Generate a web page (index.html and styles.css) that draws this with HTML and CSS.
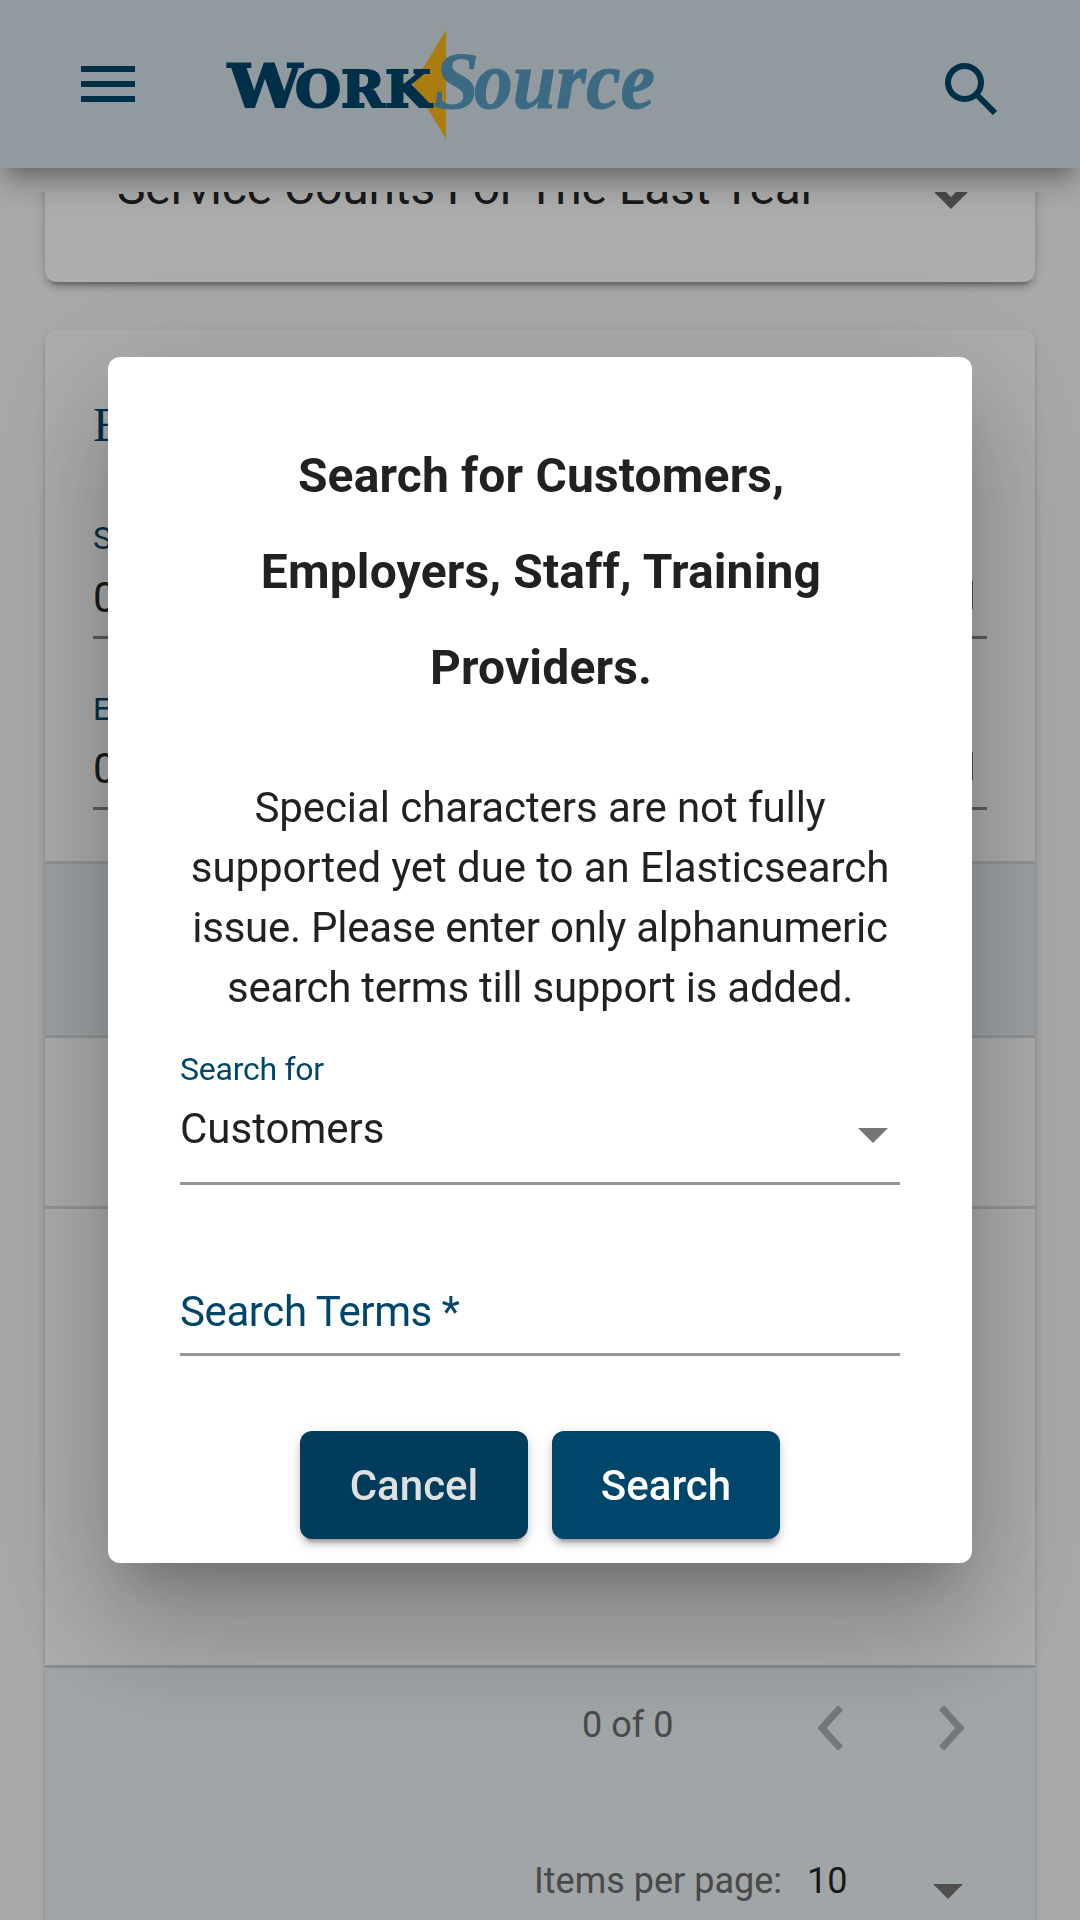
FILE: index.html
```
<!DOCTYPE html>
<html lang="en">
<head>
<meta charset="utf-8">
<title>WorkSource</title>
<link rel="stylesheet" href="styles.css">
</head>
<body>
<div class="page">
  <header class="topbar">
    <svg class="icon menu" viewBox="0 0 54 36" aria-label="Menu"><path d="M0 0h54v6H0zM0 15h54v6H0zM0 30h54v6H0z"/></svg>
    <svg class="logo" viewBox="0 0 440 120" aria-label="WorkSource">
      <path class="star" d="M226 6V115L193 60.500z"/>
      <g class="work">
        <text x="8" y="82.500" font-size="59" textLength="74" lengthAdjust="spacingAndGlyphs">W</text>
        <text x="75" y="82.500" font-size="50" textLength="136" lengthAdjust="spacingAndGlyphs">ORK</text>
      </g>
      <text class="source" x="214" y="84" font-size="81" textLength="45" lengthAdjust="spacingAndGlyphs">S</text>
      <text class="source" x="254" y="84" font-size="83" textLength="181" lengthAdjust="spacingAndGlyphs">ource</text>
    </svg>
    <svg class="icon search" viewBox="0 0 52 52" aria-label="Search"><circle cx="19.500" cy="19.500" r="16.500"/><path d="M32 32l18 18"/></svg>
  </header>
  <main class="scroller">
    <section class="card counts">
      <h2>Service Counts For The Last Year</h2>
      <svg class="chevron" viewBox="0 0 36 24"><path d="M4.500 3.500L18 17 31.500 3.500"/></svg>
    </section>
    <section class="card events">
      <h3>Events</h3>
      <div class="date"><label>Start Date</label><div class="row"><span>01/01/2021</span><i class="cal"></i></div></div>
      <div class="date"><label>End Date</label><div class="row"><span>01/31/2021</span><i class="cal"></i></div></div>
      <div class="thead"></div>
      <div class="trow"></div>
      <div class="empty"></div>
      <footer class="pager">
        <div class="range">
          <span>0 of 0</span>
          <svg class="nav" viewBox="0 0 26 46"><path d="M23.500 2.500L5 23l18.500 20.500"/></svg>
          <svg class="nav next" viewBox="0 0 26 46"><path d="M2.500 2.500L21 23 2.500 43.500"/></svg>
        </div>
        <div class="size"><span>Items per page:</span><b>10</b><i class="caret"></i></div>
      </footer>
    </section>
  </main>
</div>
<div class="scrim">
  <div class="dialog" role="dialog">
    <h1>Search for Customers,<br>Employers, Staff, Training<br>Providers.</h1>
    <p class="note"><span>Special characters are not fully</span><span>supported yet due to an Elasticsearch</span><span class="tight">issue. Please enter only alphanumeric</span><span class="tight">search terms till support is added.</span></p>
    <div class="field select">
      <label>Search for</label>
      <div class="value"><span>Customers</span><i class="caret"></i></div>
    </div>
    <div class="field terms"><label>Search Terms *</label></div>
    <div class="actions">
      <button class="btn cancel">Cancel</button>
      <button class="btn">Search</button>
    </div>
  </div>
</div>
</body>
</html>
```
FILE: styles.css
```
* { box-sizing: border-box; }
body {
  margin: 0;
  font-family: Roboto, sans-serif;
  color: rgba(0, 0, 0, .87);
}
h1, h2, h3, p { margin: 0; }
.page {
  display: flex;
  flex-direction: column;
  height: 1920px;
  overflow: hidden;
  background: #fafafa;
}
.topbar {
  position: relative;
  z-index: 1;
  flex: none;
  display: flex;
  align-items: center;
  height: 168px;
  padding: 0 81px;
  background: #d5e4eb;
  box-shadow: 0 15px 15px -9px rgba(0, 0, 0, .2), 0 18px 30px 0 rgba(0, 0, 0, .14), 0 9px 42px 0 rgba(0, 0, 0, .12);
}
.icon { fill: #00466b; }
.menu { width: 54px; height: 36px; }
.logo { width: 440px; height: 120px; margin-left: 85px; overflow: visible; }
.star { fill: #fbb818; }
.work {
  fill: #00466b;
  stroke: #00466b;
  stroke-width: 2px;
  font-family: "DejaVu Serif", serif;
  font-weight: 700;
}
.source {
  fill: #5a9dc2;
  stroke: #5a9dc2;
  stroke-width: 1px;
  font-family: "Liberation Serif", serif;
  font-weight: 700;
  font-style: italic;
}
.search {
  width: 52px;
  height: 52px;
  margin: 10px 2px 0 auto;
  fill: none;
  stroke: #00466b;
  stroke-width: 6px;
}
.scroller {
  flex: 1;
  display: flex;
  flex-direction: column;
  gap: 48px;
  margin-top: 24px;
  padding: 0 45px;
  overflow: hidden;
}
.card { flex: none; border-radius: 12px; background: #fff; }
.counts {
  display: flex;
  justify-content: space-between;
  align-items: center;
  height: 188px;
  margin-top: -98px;
  padding: 0 66px 0 72px;
  box-shadow: 0 9px 3px -6px rgba(0, 0, 0, .2), 0 6px 6px 0 rgba(0, 0, 0, .14), 0 3px 15px 0 rgba(0, 0, 0, .12);
}
.counts h2 { font-size: 48px; line-height: 60px; font-weight: 400; letter-spacing: -.15px; }
.chevron { width: 36px; height: 24px; margin-top: 19px; fill: none; stroke: #6f6f6f; stroke-width: 8.500px; }
.events {
  height: 1700px;
  padding-top: 65px;
  overflow: hidden;
  box-shadow: 0 6px 3px -3px rgba(0, 0, 0, .2), 0 3px 3px 0 rgba(0, 0, 0, .14), 0 3px 9px 0 rgba(0, 0, 0, .12);
}
.events h3 {
  padding-left: 48px;
  font: 400 48px/60px "Liberation Serif", serif;
  color: #00466b;
}
.date {
  display: flex;
  flex-direction: column;
  gap: 18px;
  height: 119px;
  margin: 65px 48px 0;
  border-bottom: 3px solid #8a8a8a;
}
.date + .date { margin-top: 52px; }
.date label { font-size: 32px; line-height: 36px; color: #00466b; }
.row { display: flex; justify-content: space-between; font-size: 42px; line-height: 48px; }
.cal { width: 28px; height: 28px; margin: 7px 14px 0 0; border: 3px solid #777; }
.thead { height: 177px; margin-top: 51px; border: solid #d8dcde; border-width: 3px 0; background: #e6eff4; }
.trow { height: 171px; border-bottom: 3px solid #dcdcdc; }
.empty { height: 456px; }
.pager { height: 400px; border-top: 3px solid #c8d0d4; background: #ecf3f6; color: #6c6c6c; font-size: 36px; }
.range, .size { display: flex; align-items: center; }
.range { height: 120px; padding: 0 0 6px 537px; }
.nav { width: 26px; height: 46px; margin: 5px 0 0 144px; fill: none; stroke: #acb1b3; stroke-width: 7px; }
.next { margin-left: 96px; }
.size { height: 186px; padding-left: 489px; }
.size b { margin-left: 25px; font-weight: 400; color: rgba(0, 0, 0, .87); }
.size .caret { margin: 20px 0 0 86px; }
.caret {
  width: 30px;
  border: solid transparent;
  border-width: 15px 15px 0;
  border-top-color: #757575;
}
.scrim {
  position: fixed;
  inset: 0;
  z-index: 2;
  display: flex;
  justify-content: center;
  align-items: center;
  background: rgba(0, 0, 0, .32);
}
.dialog {
  width: 864px;
  height: 1206px;
  padding: 71px 72px 0;
  border-radius: 12px;
  background: #fff;
  box-shadow: 0 33px 45px -21px rgba(0, 0, 0, .2), 0 72px 114px 9px rgba(0, 0, 0, .14), 0 27px 138px 24px rgba(0, 0, 0, .12);
}
.dialog h1 {
  margin-right: -2px;
  font-size: 48px;
  line-height: 96px;
  font-weight: 700;
  text-align: center;
  letter-spacing: .15px;
  white-space: nowrap;
}
.note {
  display: flex;
  flex-direction: column;
  margin: 62px -20px 0;
  font-size: 42px;
  line-height: 60px;
  text-align: center;
  letter-spacing: -.08px;
  white-space: nowrap;
}
.tight { letter-spacing: -.26px; }
.field { display: flex; flex-direction: column; border-bottom: 3px solid #949494; color: #00466b; }
.select { gap: 18px; height: 134px; margin-top: 33px; }
.select label { font-size: 32px; line-height: 36px; letter-spacing: -.25px; }
.value { display: flex; justify-content: space-between; align-items: center; font-size: 42px; line-height: 48px; color: rgba(0, 0, 0, .87); }
.value .caret { margin: 12px 12px 0 0; }
.terms { height: 68px; margin-top: 103px; font-size: 42px; line-height: 48px; letter-spacing: -.4px; }
.actions { display: flex; justify-content: center; gap: 24px; margin-top: 75px; }
.btn {
  width: 228px;
  height: 108px;
  padding: 2px 0 0;
  border: 0;
  border-radius: 12px;
  background: #00466b;
  color: #fff;
  font: 500 42px/106px Roboto, sans-serif;
  box-shadow: 0 9px 3px -6px rgba(0, 0, 0, .2), 0 6px 6px 0 rgba(0, 0, 0, .14), 0 3px 15px 0 rgba(0, 0, 0, .12);
}
.cancel { background: #003c5c; color: #e0e0e0; }
```
